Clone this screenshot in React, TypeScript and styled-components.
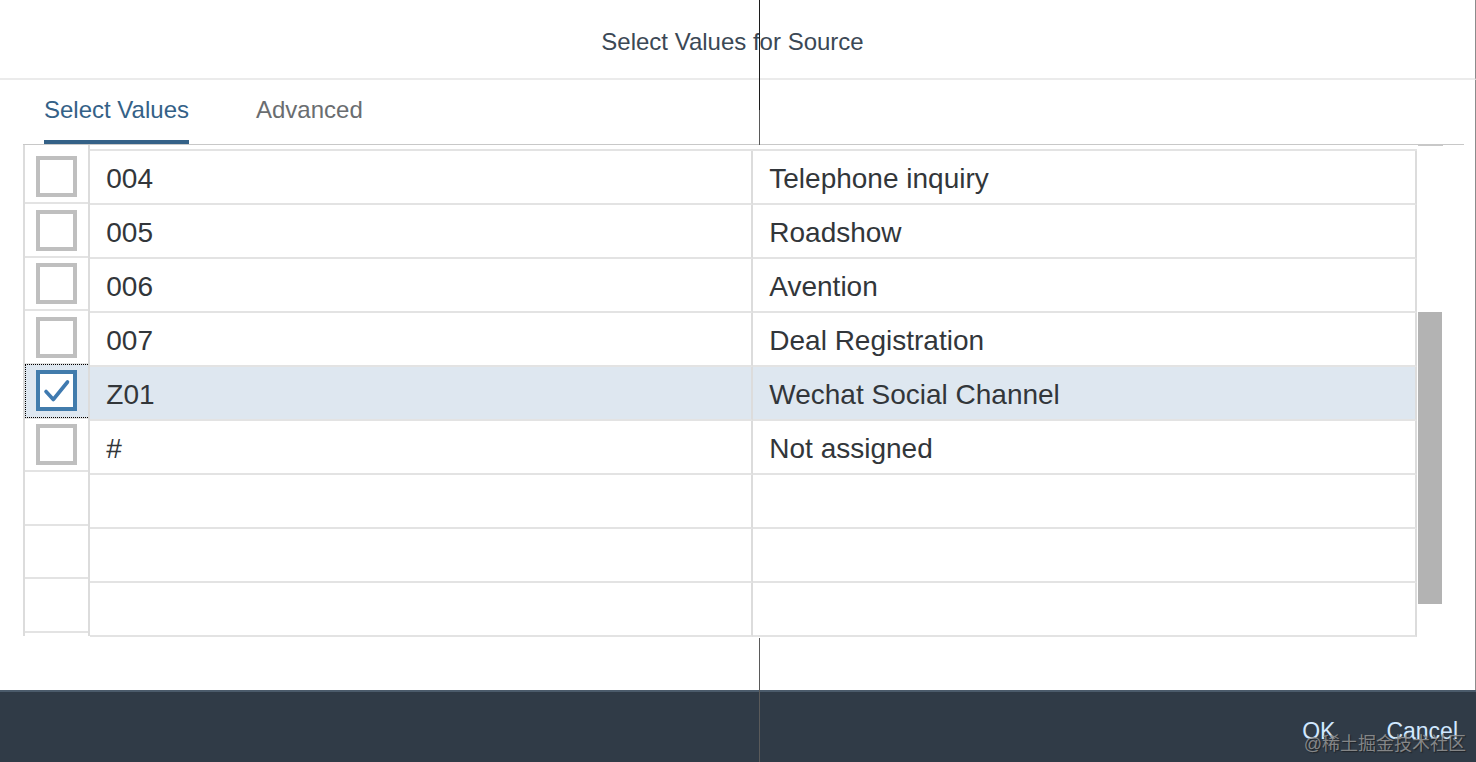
import styled, { createGlobalStyle } from "styled-components";

const GlobalStyle = createGlobalStyle`
  html, body {
    margin: 0;
    padding: 0;
    background: #ffffff;
  }
  body {
    font-family: "Liberation Sans", Arial, sans-serif;
    overflow: hidden;
  }
`;

const Dialog = styled.div`
  position: relative;
  width: 1476px;
  height: 762px;
  display: flex;
  flex-direction: column;
  background: #ffffff;
`;

const Header = styled.header`
  height: 72px;
  flex-shrink: 0;
  border-bottom: 2px solid #ebebeb;
  border-right: 1px solid #8c8c8c;
  display: flex;
  justify-content: center;
  padding: 6px 10px 0 0;
  box-sizing: content-box;
`;

const Title = styled.h1`
  margin: 0;
  font-size: 24px;
  font-weight: 400;
  line-height: 72px;
  color: #3b4855;
`;

const Body = styled.main`
  flex: 1;
  border-right: 1px solid #8c8c8c;
  display: flex;
  flex-direction: column;
`;

const TabBar = styled.nav`
  margin-left: 23px;
  width: 1420px;
  height: 64px;
  border-bottom: 1px solid #c8c8c8;
  display: flex;
  gap: 67px;
  padding-left: 21px;
  box-sizing: content-box;
`;

const Tab = styled.div<{ $active?: boolean }>`
  height: 64px;
  box-sizing: border-box;
  line-height: 60px;
  font-size: 24px;
  color: ${(p) => (p.$active ? "#346187" : "#6a6d70")};
  border-bottom: 4px solid ${(p) => (p.$active ? "#346187" : "transparent")};
`;

const TableArea = styled.section`
  position: relative;
  z-index: 2;
  background: #ffffff;
  margin-left: 23px;
  width: 1420px;
  height: 493px;
  display: flex;
`;

const SelectorColumn = styled.div`
  width: 68px;
  box-sizing: border-box;
  border-left: 2px solid #dcdcdc;
  border-right: 2px solid #dcdcdc;
  padding-top: 5.7px;
  height: 491px;
  overflow: hidden;
`;

const SelectorCell = styled.div<{ $selected?: boolean; $focused?: boolean }>`
  position: relative;
  height: 53.6px;
  box-sizing: border-box;
  border-bottom: 2px solid #e3e3e3;
  display: flex;
  align-items: center;
  justify-content: center;
  background: ${(p) => (p.$selected ? "#dee7f0" : "#ffffff")};

  ${(p) =>
    p.$focused &&
    `
    &::after {
      content: "";
      position: absolute;
      top: -1px;
      left: 0;
      right: -2px;
      bottom: -1px;
      border: 1px dotted #000000;
    }
  `}
`;

const Box = styled.span<{ $checked?: boolean }>`
  width: 41px;
  height: 41px;
  box-sizing: border-box;
  border: 4px solid ${(p) => (p.$checked ? "#427cac" : "#bfbfbf")};
  background: #ffffff;
  display: flex;
  align-items: center;
  justify-content: center;
`;

const Grid = styled.div`
  margin-top: 4px;
  width: 1327px;
  align-self: flex-start;
  border-top: 2px solid #e3e3e3;
  display: grid;
  grid-template-columns: 663px 664px;
`;

const Cell = styled.div<{ $selected?: boolean }>`
  height: 54px;
  box-sizing: border-box;
  border-bottom: 2px solid #e3e3e3;
  border-right: 2px solid #dcdcdc;
  padding: 4px 0 0 16px;
  line-height: 48px;
  font-size: 28px;
  color: #32363a;
  white-space: nowrap;
  background: ${(p) => (p.$selected ? "#dee7f0" : "#ffffff")};
`;

const ScrollTrack = styled.div`
  width: 25px;
  padding-top: 166px;
  box-sizing: border-box;
  border-top: 2px solid #c8c8c8;
  margin-top: -1px;
  margin-left: 1px;
`;

const ScrollThumb = styled.div`
  width: 24px;
  height: 292px;
  background: #b3b3b3;
`;

const Footer = styled.footer`
  height: 72px;
  flex-shrink: 0;
  background: #303b47;
  border-top: 2px solid #4b5b6b;
  display: flex;
  justify-content: flex-end;
  align-items: center;
  gap: 51px;
  padding: 9px 18px 0 0;
  box-sizing: border-box;
`;

const FooterButton = styled.button`
  background: none;
  border: none;
  padding: 0;
  font-family: "Liberation Sans", Arial, sans-serif;
  font-size: 23px;
  color: #d1e8ff;
  cursor: pointer;
`;

const Splitter = styled.div`
  position: absolute;
  left: 759px;
  top: 0;
  bottom: 0;
  width: 1px;
  z-index: 1;
  background: linear-gradient(
    to bottom,
    #1c1c1c 0px,
    #1c1c1c 110px,
    #5a5a5a 110px,
    #5a5a5a 100%
  );
  pointer-events: none;
`;

const Watermark = styled.div`
  position: absolute;
  right: 10px;
  bottom: 7px;
  z-index: 3;
  font-family: "Liberation Sans", "Noto Sans CJK SC", sans-serif;
  font-size: 18px;
  color: rgba(150, 150, 150, 0.85);
  text-shadow: 1px 1px 1px rgba(20, 20, 20, 0.6);
  pointer-events: none;
`;

type Row = { key: string; text: string; checked?: boolean } | null;

const rows: Row[] = [
  { key: "004", text: "Telephone inquiry" },
  { key: "005", text: "Roadshow" },
  { key: "006", text: "Avention" },
  { key: "007", text: "Deal Registration" },
  { key: "Z01", text: "Wechat Social Channel", checked: true },
  { key: "#", text: "Not assigned" },
  null,
  null,
  null,
];

function Checkbox({ checked }: { checked?: boolean }) {
  return (
    <Box $checked={checked}>
      {checked ? (
        <svg width="33" height="33" viewBox="0 0 33 33">
          <path
            d="M6 17.5 L13.3 25.5 L27.5 8"
            fill="none"
            stroke="#3f7ab0"
            strokeWidth="3.6"
            strokeLinecap="round"
            strokeLinejoin="round"
          />
        </svg>
      ) : null}
    </Box>
  );
}

function App() {
  return (
    <>
      <GlobalStyle />
      <Dialog>
        <Header>
          <Title>Select Values for Source</Title>
        </Header>
        <Body>
          <TabBar>
            <Tab $active>Select Values</Tab>
            <Tab>Advanced</Tab>
          </TabBar>
          <TableArea>
            <SelectorColumn>
              {rows.map((r, i) => (
                <SelectorCell key={i} $selected={r?.checked} $focused={r?.checked}>
                  {r ? <Checkbox checked={r.checked} /> : null}
                </SelectorCell>
              ))}
            </SelectorColumn>
            <Grid>
              {rows.flatMap((r, i) => [
                <Cell key={`k${i}`} $selected={r?.checked}>
                  {r?.key}
                </Cell>,
                <Cell key={`t${i}`} $selected={r?.checked}>
                  {r?.text}
                </Cell>,
              ])}
            </Grid>
            <ScrollTrack>
              <ScrollThumb />
            </ScrollTrack>
          </TableArea>
        </Body>
        <Footer>
          <FooterButton>OK</FooterButton>
          <FooterButton>Cancel</FooterButton>
        </Footer>
        <Splitter />
        <Watermark>@稀土掘金技术社区</Watermark>
      </Dialog>
    </>
  );
}

export default App;
